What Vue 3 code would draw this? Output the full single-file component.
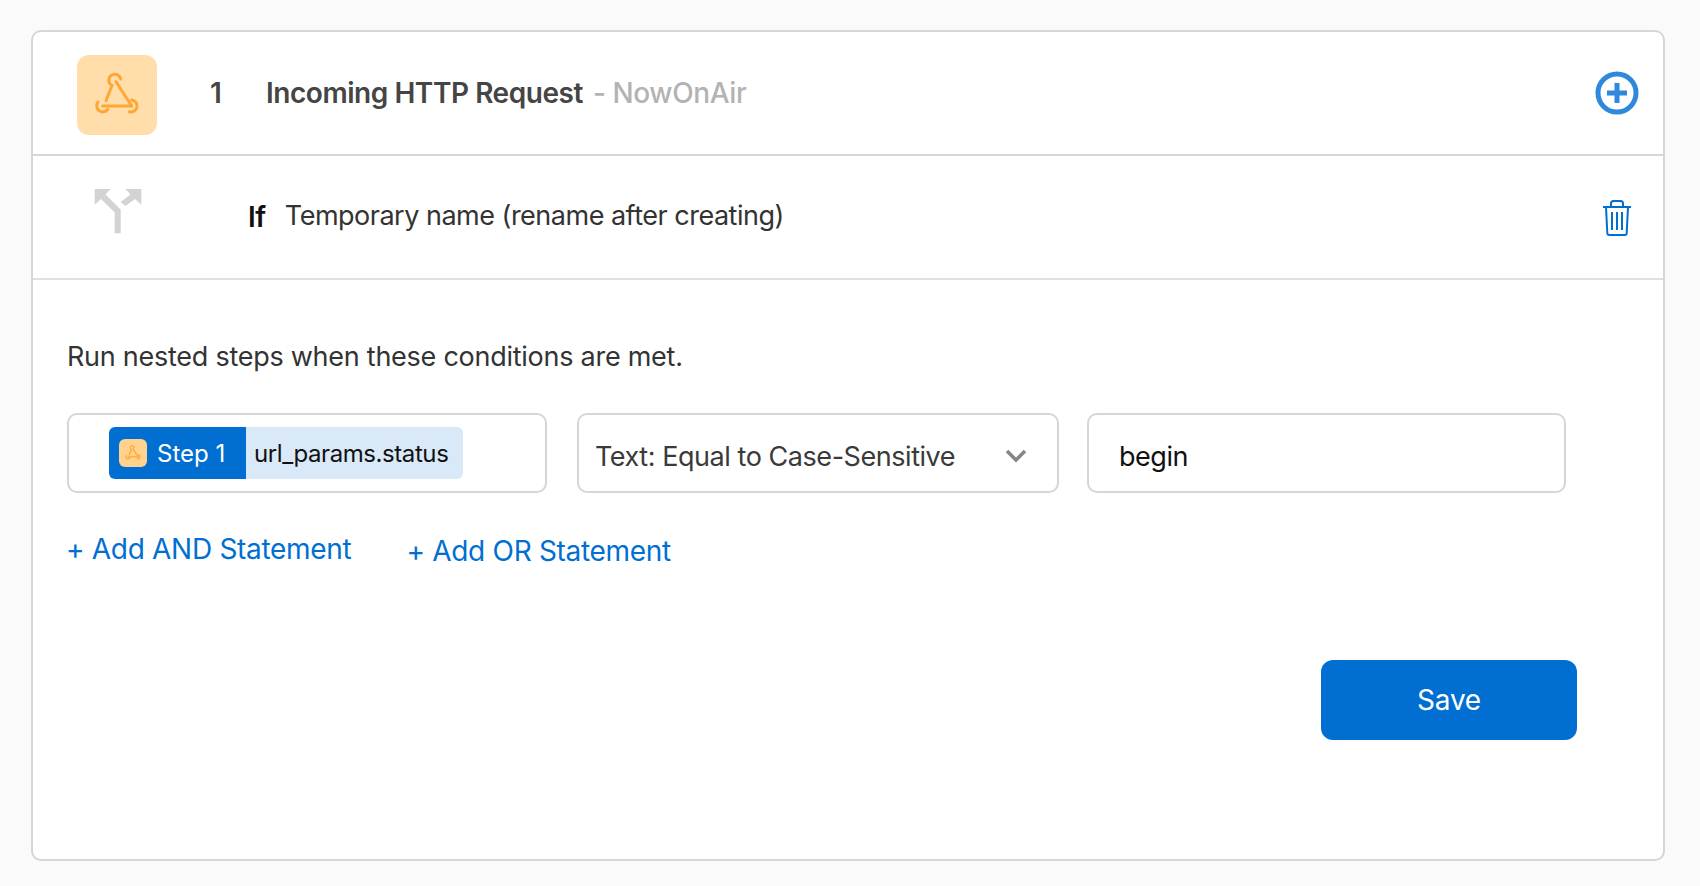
<script setup>
const title = 'Incoming HTTP Request'
</script>

<template>
  <main class="page">
    <section class="card">
      <header class="step-row">
        <div class="app-icon">
          <svg width="80" height="80" viewBox="0 0 80 80" fill="none" stroke="#ffa733" stroke-width="3" stroke-linecap="round">
            <path d="M43.700 24a6 6 0 1 0-8.700 6.500L29 45.700" />
            <path d="M39 26.700 54.700 51" />
            <path d="M25.700 51h29" />
            <path d="M21 47a6 6 0 1 0 9.700 7.500" />
            <path d="M54.700 45a6 6 0 1 1-2.400 11.700" />
          </svg>
        </div>
        <span class="step-number">1</span>
        <h1 class="step-title">{{ title }}</h1>
        <span class="step-app">- NowOnAir</span>
        <svg class="plus" width="44" height="44" viewBox="0 0 44 44" fill="none" stroke="#2f88db" stroke-width="5">
          <circle cx="22" cy="22" r="19" />
          <path d="M22 12v20M12 22h20" />
        </svg>
      </header>

      <div class="if-row">
        <svg class="branch" width="48" height="48" viewBox="0 0 48 48" fill="#d3d3d3">
          <path d="M.7 3h16l-5.200 5.500 15.200 15v23.800h-6V26.500L7 13 .7 18.700z" />
          <path d="M47.300 3h-16l5.200 5.500-9.800 7.500 4.800 4L41 13l6.300 5.700z" />
        </svg>
        <strong class="if-label">If</strong>
        <span class="if-name">Temporary name (rename after creating)</span>
        <svg class="trash" width="30" height="36" viewBox="0 0 30 36" fill="none" stroke="#006fd1" stroke-width="2">
          <path d="M1 7h28" />
          <path d="M9 7V3.500C9 2 10 1 11.500 1h7C20 1 21 2 21 3.500V7" />
          <path d="M4 7l1.300 26c0 1.300 1 2 2 2h15.400c1 0 2-.7 2-2L26 7" />
          <path d="M10 12v18M15 12v18M20 12v18" />
        </svg>
      </div>

      <div class="editor">
        <p class="intro">Run nested steps when these conditions are met.</p>

        <div class="conditions">
          <div class="field field-token">
            <div class="token">
              <span class="token-step">
                <span class="token-icon">
                  <svg width="28" height="28" viewBox="0 0 80 80" fill="none" stroke="#ffa733" stroke-width="3.500" stroke-linecap="round">
                    <path d="M43.700 24a6 6 0 1 0-8.700 6.500L29 45.700" />
                    <path d="M39 26.700 54.700 51" />
                    <path d="M25.700 51h29" />
                    <path d="M21 47a6 6 0 1 0 9.700 7.500" />
                    <path d="M54.700 45a6 6 0 1 1-2.400 11.700" />
                  </svg>
                </span>
                Step 1
              </span>
              <span class="token-path">url_params.status</span>
            </div>
          </div>
          <div class="field field-select">
            <span>Text: Equal to Case-Sensitive</span>
            <svg width="22" height="14" viewBox="0 0 22 14" fill="none" stroke="#868686" stroke-width="3.500">
              <path d="M2 2l9 9 9-9" />
            </svg>
          </div>
          <div class="field field-text">begin</div>
        </div>

        <div class="links">
          <a class="link">+ Add AND Statement</a>
          <a class="link link-or">+ Add OR Statement</a>
        </div>

        <div class="actions">
          <button class="save" type="button">Save</button>
        </div>
      </div>
    </section>
  </main>
</template>

<style>
html, body {
  margin: 0;
  background: #fafafa;
}
</style>

<style scoped>
.page {
  box-sizing: border-box;
  height: 886px;
  padding: 30px 35px 0 31px;
  font-family: Inter, "Noto Sans", sans-serif;
}
.card {
  box-sizing: border-box;
  height: 831px;
  background: #fff;
  border: 2px solid #d6d6d6;
  border-radius: 10px;
}
.step-row {
  box-sizing: border-box;
  height: 124px;
  display: flex;
  align-items: center;
  padding: 0 24px 0 44px;
  border-bottom: 2px solid #d6d6d6;
}
.app-icon {
  width: 80px;
  height: 80px;
  margin-top: 4px;
  background: #ffdeab;
  border-radius: 12px;
  flex: none;
}
.app-icon svg, .token-icon svg { display: block; }
.step-number {
  margin-left: 53px;
  width: 56px;
  font-size: 28px;
  font-weight: 600;
  color: #454545;
}
.step-title {
  margin: 0;
  font-size: 28px;
  line-height: 34px;
  font-weight: 600;
  letter-spacing: -0.45px;
  color: #454545;
}
.step-app {
  margin-left: 10px;
  font-size: 28px;
  font-weight: 500;
  letter-spacing: -0.4px;
  color: #b3b3b3;
}
.plus { margin-left: auto; }
.if-row {
  box-sizing: border-box;
  height: 124px;
  display: flex;
  align-items: flex-start;
  padding: 30px 31px 0 61px;
  border-bottom: 2px solid #dde1e6;
}
.branch { flex: none; }
.if-label {
  margin: 14px 0 0 106px;
  font-size: 28px;
  line-height: 34px;
  font-weight: 600;
  letter-spacing: -0.4px;
  color: #111;
}
.if-name {
  margin: 13px 0 0 19px;
  font-size: 27px;
  line-height: 34px;
  letter-spacing: -0.5px;
  color: #333;
}
.trash { margin: 14px 0 0 auto; }
.editor { padding: 60px 0 0 34px; }
.intro {
  margin: 0;
  font-size: 27px;
  line-height: 34px;
  letter-spacing: -0.26px;
  color: #333;
}
.conditions {
  display: flex;
  gap: 30px;
  margin-top: 39px;
}
.field {
  box-sizing: border-box;
  height: 80px;
  background: #fff;
  border: 2px solid #d6d6d6;
  border-radius: 10px;
  display: flex;
  align-items: center;
  font-size: 27px;
  letter-spacing: -0.45px;
}
.field-token { width: 480px; padding-left: 40px; }
.field-select {
  width: 482px;
  margin-right: -2px;
  padding: 6px 30px 0 16px;
  justify-content: space-between;
  color: #3a3a3a;
}
.field-text {
  width: 479px;
  padding: 6px 0 0 30px;
  color: #111;
}
.token {
  display: flex;
  height: 52px;
  font-size: 24px;
  letter-spacing: 0;
}
.token-step {
  display: flex;
  align-items: center;
  gap: 10px;
  width: 137px;
  box-sizing: border-box;
  padding-left: 10px;
  background: #006fd1;
  color: #fff;
  border-radius: 6px 0 0 6px;
}
.token-icon {
  width: 28px;
  height: 28px;
  background: #ffd28e;
  border-radius: 6px;
}
.token-path {
  display: flex;
  align-items: center;
  width: 217px;
  box-sizing: border-box;
  padding-left: 8px;
  background: #d9e9f8;
  color: #111;
  letter-spacing: -0.42px;
  border-radius: 0 6px 6px 0;
}
.links {
  display: flex;
  align-items: flex-start;
  margin: 38px 0 0 -1px;
  font-size: 28px;
  line-height: 36px;
  letter-spacing: -0.3px;
}
.link { color: #006fd1; }
.link-or { margin: 2px 0 0 55px; }
.actions {
  display: flex;
  justify-content: flex-end;
  padding-right: 86px;
  margin-top: 91px;
}
.save {
  width: 256px;
  height: 80px;
  border: 0;
  border-radius: 12px;
  background: #006fd1;
  color: #fff;
  font: 400 28px Inter, sans-serif;
  letter-spacing: -0.2px;
}
</style>
